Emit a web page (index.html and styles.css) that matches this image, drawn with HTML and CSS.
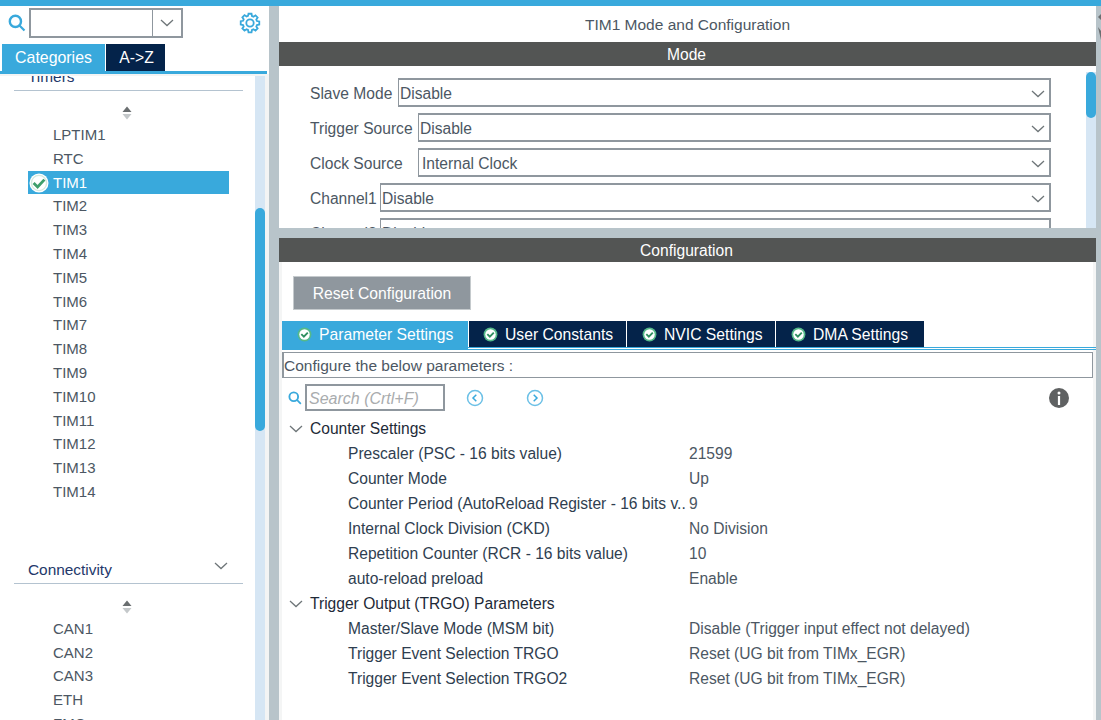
FILE: index.html
```html
<!DOCTYPE html>
<html lang="en">
<head>
<meta charset="utf-8">
<title>TIM1 Mode and Configuration</title>
<link rel="stylesheet" href="styles.css">
</head>
<body>
<svg class="defs" width="0" height="0" aria-hidden="true">
  <symbol id="chev" viewBox="0 0 14 8"><path d="M1 1l6 5.5L13 1" fill="none" stroke="#6f7679" stroke-width="1.3"/></symbol>
  <symbol id="check" viewBox="0 0 20 20"><circle cx="10" cy="10" r="9.5" fill="#fff"/><circle cx="10" cy="10" r="7.6" fill="#fff" stroke="#d6eadf" stroke-width="1.4"/><path d="M4.6 10l4 4 6.8-7.4" fill="none" stroke="#3f9f6b" stroke-width="2.8"/></symbol>
  <symbol id="mini" viewBox="0 0 16 16"><circle cx="8" cy="8" r="7.4" fill="#55b98a"/><circle cx="8" cy="8" r="5.6" fill="#fff"/><path d="M4.6 7.6l2.7 2.7 4.2-4.4" fill="none" stroke="#2f8f60" stroke-width="2"/></symbol>
  <symbol id="lens" viewBox="0 0 18 18"><circle cx="7.4" cy="7.4" r="5.6" fill="none" stroke="#39a9dc" stroke-width="2.4"/><path d="M11.5 11.5l5 5" stroke="#39a9dc" stroke-width="2.2"/></symbol>
  <symbol id="spin" viewBox="0 0 12 14"><path d="M6 0.5L10.5 6h-9z" fill="#6a6e70"/><path d="M1.5 8h9L6 13.5z" fill="#c4c8ca"/></symbol>
</svg>

<div class="topbar"></div>
<div class="app">
  <aside class="left">
    <div class="tools">
      <svg class="lens"><use href="#lens"/></svg>
      <div class="combo"><span class="combo-field"></span><span class="combo-btn"><svg class="chev"><use href="#chev"/></svg></span></div>
      <svg class="gear" viewBox="0 0 22 22"><path d="M9.3 1.5h3.4l.5 2.6 1.7.7 2.2-1.5 2.4 2.4-1.5 2.2.7 1.7 2.6.5v3.4l-2.6.5-.7 1.7 1.5 2.2-2.4 2.4-2.2-1.5-1.7.7-.5 2.6H9.3l-.5-2.6-1.7-.7-2.2 1.5-2.4-2.4 1.5-2.2-.7-1.7-2.6-.5V9.8l2.6-.5.7-1.7-1.5-2.2 2.4-2.4 2.2 1.5 1.7-.7z" fill="none" stroke="#39a9dc" stroke-width="2" transform="translate(1.1 .4) scale(.9)"/><circle cx="11" cy="11" r="3.7" fill="none" stroke="#39a9dc" stroke-width="1.8"/></svg>
    </div>
    <div class="cat-tabs"><span class="cat-tab on">Categories</span><span class="cat-tab">A-&gt;Z</span></div>
    <div class="left-body">
      <div class="list-scroll">
        <div class="list">
          <div class="sec-title clipped">Timers</div>
          <div class="spin-row"><svg class="spin"><use href="#spin"/></svg></div>
          <div class="item">LPTIM1</div>
          <div class="item">RTC</div>
          <div class="item sel"><svg class="check"><use href="#check"/></svg>TIM1</div>
          <div class="item">TIM2</div>
          <div class="item">TIM3</div>
          <div class="item">TIM4</div>
          <div class="item">TIM5</div>
          <div class="item">TIM6</div>
          <div class="item">TIM7</div>
          <div class="item">TIM8</div>
          <div class="item">TIM9</div>
          <div class="item">TIM10</div>
          <div class="item">TIM11</div>
          <div class="item">TIM12</div>
          <div class="item">TIM13</div>
          <div class="item">TIM14</div>
          <div class="sec-title second">Connectivity<svg class="chev sec-chev"><use href="#chev"/></svg></div>
          <div class="spin-row"><svg class="spin"><use href="#spin"/></svg></div>
          <div class="item">CAN1</div>
          <div class="item">CAN2</div>
          <div class="item">CAN3</div>
          <div class="item">ETH</div>
          <div class="item">FMC</div>
        </div>
      </div>
      <div class="vtrack"><div class="vthumb list-thumb"></div></div>
    </div>
  </aside>
  <div class="split"></div>
  <main class="right">
    <div class="title">TIM1 Mode and Configuration</div>
    <div class="bar">Mode</div>
    <div class="mode">
      <div class="mode-rows">
        <div class="row"><label class="lbl w-slave">Slave Mode</label><div class="sel-box">Disable<svg class="chev"><use href="#chev"/></svg></div></div>
        <div class="row"><label class="lbl w-wide">Trigger Source</label><div class="sel-box">Disable<svg class="chev"><use href="#chev"/></svg></div></div>
        <div class="row"><label class="lbl w-wide">Clock Source</label><div class="sel-box inset">Internal Clock<svg class="chev"><use href="#chev"/></svg></div></div>
        <div class="row"><label class="lbl w-chan">Channel1</label><div class="sel-box">Disable<svg class="chev"><use href="#chev"/></svg></div></div>
        <div class="row"><label class="lbl w-chan">Channel2</label><div class="sel-box">Disable<svg class="chev"><use href="#chev"/></svg></div></div>
      </div>
      <div class="vtrack mode-track"><div class="vthumb mode-thumb"></div></div>
    </div>
    <div class="hsplit"></div>
    <div class="bar">Configuration</div>
    <div class="config">
      <button class="reset">Reset Configuration</button>
      <div class="tabs">
        <span class="tab on"><svg class="mini"><use href="#mini"/></svg>Parameter Settings</span>
        <span class="tab t2"><svg class="mini"><use href="#mini"/></svg>User Constants</span>
        <span class="tab t3"><svg class="mini"><use href="#mini"/></svg>NVIC Settings</span>
        <span class="tab t3"><svg class="mini"><use href="#mini"/></svg>DMA Settings</span>
      </div>
      <div class="hint">Configure the below parameters :</div>
      <div class="search-row">
        <svg class="lens small"><use href="#lens"/></svg>
        <div class="search">Search (Crtl+F)</div>
        <svg class="nav prev" viewBox="0 0 18 18"><circle cx="9" cy="9" r="7.5" fill="none" stroke="#6cc0e6" stroke-width="1.5"/><path d="M10.3 5.8L7 9l3.3 3.2" fill="none" stroke="#39a9dc" stroke-width="1.5"/></svg>
        <svg class="nav" viewBox="0 0 18 18"><circle cx="9" cy="9" r="7.5" fill="none" stroke="#6cc0e6" stroke-width="1.5"/><path d="M7.7 5.8L11 9l-3.3 3.2" fill="none" stroke="#39a9dc" stroke-width="1.5"/></svg>
        <svg class="info" viewBox="0 0 20 20"><circle cx="10" cy="10" r="10" fill="#5f6162"/><circle cx="10" cy="5" r="1.5" fill="#fff"/><rect x="8.9" y="8" width="2.2" height="9" fill="#fff"/></svg>
      </div>
      <div class="tree">
        <div class="group"><svg class="chev"><use href="#chev"/></svg>Counter Settings</div>
        <div class="param"><span class="pname">Prescaler (PSC - 16 bits value)</span><span>21599</span></div>
        <div class="param"><span class="pname">Counter Mode</span><span>Up</span></div>
        <div class="param"><span class="pname">Counter Period (AutoReload Register - 16 bits v..</span><span>9</span></div>
        <div class="param"><span class="pname">Internal Clock Division (CKD)</span><span>No Division</span></div>
        <div class="param"><span class="pname">Repetition Counter (RCR - 16 bits value)</span><span>10</span></div>
        <div class="param"><span class="pname">auto-reload preload</span><span>Enable</span></div>
        <div class="group"><svg class="chev"><use href="#chev"/></svg>Trigger Output (TRGO) Parameters</div>
        <div class="param"><span class="pname">Master/Slave Mode (MSM bit)</span><span>Disable (Trigger input effect not delayed)</span></div>
        <div class="param"><span class="pname">Trigger Event Selection TRGO</span><span>Reset (UG bit from TIMx_EGR)</span></div>
        <div class="param"><span class="pname">Trigger Event Selection TRGO2</span><span>Reset (UG bit from TIMx_EGR)</span></div>
      </div>
    </div>
  </main>
  <div class="edge">
    <svg class="edge-arrows" viewBox="0 0 5 36"><path d="M5 1L2 4l3 3z" fill="#6a6e70"/><path d="M2 14l3 4v9z" fill="#6a6e70"/></svg>
  </div>
</div>
</body>
</html>
```
FILE: styles.css
```css
* { box-sizing: border-box; }
html, body { margin: 0; height: 100%; overflow: hidden; }
body {
  font-family: "Liberation Sans", Arial, sans-serif;
  font-size: 15px;
  color: #4c5763;
  background: #fff;
  display: flex;
  flex-direction: column;
}
.defs { position: absolute; }
.topbar { height: 6px; background: #39a9dc; flex: none; }
.app { flex: 1; display: flex; min-height: 0; }

.left { width: 269px; flex: none; display: flex; flex-direction: column; min-height: 0; }
.tools { height: 38px; display: flex; align-items: center; flex: none; padding: 0 0 4px 8px; }
.lens { width: 18px; height: 18px; flex: none; }
.combo { width: 154px; height: 30px; margin-left: 3px; border: 2px solid #8f979e; display: flex; }
.combo-field { flex: 1; }
.combo-btn { width: 29px; border-left: 1px solid #8f979e; display: flex; align-items: center; justify-content: center; }
.chev { width: 14px; height: 8px; flex: none; }
.gear { width: 22px; height: 22px; margin-left: 56px; flex: none; }

.cat-tabs { height: 30px; flex: none; display: flex; padding-left: 2px; gap: 1px; border-bottom: 3px solid #39a9dc; margin-right: 2px; }
.cat-tab { width: 59px; background: #04234a; color: #fff; font-size: 15.7px; padding-left: 2px; display: flex; align-items: center; justify-content: center; }
.cat-tab.on { width: 103px; background: #39a9dc; font-size: 15.9px; padding-left: 0; }

.left-body { flex: 1; display: flex; min-height: 0; padding-top: 2px; background: #f3f4f4; }
.list-scroll { width: 255px; flex: none; overflow: hidden; background: #fff; }
.list { margin-top: -8px; }
.sec-title { margin: 0 12px 0 14px; border-bottom: 1px solid #b4c3d0; color: #23386a; height: 24px; padding-left: 14px; line-height: 18px; font-size: 15.4px; display: flex; justify-content: space-between; align-items: flex-start; }
.clipped { height: 23px; }
.second { margin-top: 53px; height: 27px; line-height: 25px; }
.sec-chev { margin: 5px 15px 0 0; }
.spin-row { height: 32px; display: flex; justify-content: center; align-items: center; padding: 12px 2px 0 0; }
.second + .spin-row { height: 33px; padding-top: 13px; }
.spin { width: 12px; height: 14px; }
.item { height: 23.8px; line-height: 23.8px; padding-left: 53px; position: relative; }
.item.sel { background: #39a9dc; color: #fff; margin: 0 26px 0 28px; padding-left: 25px; }
.check { width: 20px; height: 20px; position: absolute; left: 1px; top: 2px; }
.vtrack { width: 10px; flex: none; background: #d6e6f4; position: relative; }
.vthumb { position: absolute; left: 0; width: 10px; background: #39a9dc; border-radius: 5px; }
.list-thumb { top: 132px; height: 223px; }

.split { width: 10px; flex: none; background: #b8c4ca; }
.right { width: 817px; flex: none; display: flex; flex-direction: column; min-height: 0; font-size: 15.6px; }
.edge { flex: 1; background: #b8c4ca; position: relative; }
.edge-arrows { position: absolute; right: 0; top: 7px; width: 5px; height: 36px; }
.title { height: 36px; flex: none; text-align: center; line-height: 37px; font-size: 15.5px; color: #4c5763; }
.bar { height: 24px; flex: none; background: #535554; color: #fff; text-align: center; line-height: 26px; font-size: 15.6px; padding-right: 2px; }

.mode { height: 162px; flex: none; display: flex; overflow: hidden; padding-top: 6px; }
.mode-rows { width: 772px; flex: none; padding-left: 31px; }
.row { display: flex; align-items: center; height: 29px; margin-top: 6px; gap: 5px; }
.row:first-child { margin-top: 6px; }
.lbl { flex: none; padding-top: 3px; white-space: nowrap; }
.w-slave { width: 83px; }
.w-wide { width: 103px; }
.w-chan { width: 65px; }
.sel-box { flex: 1; height: 29px; border: 2px solid #8f979e; border-width: 2px 2px 2px 1px; padding: 2px 4px 0 1px; display: flex; align-items: center; justify-content: space-between; }
.sel-box.inset { padding-left: 3px; }
.mode-track { margin: 0 0 0 35px; height: 162px; }
.mode-thumb { top: 0; height: 46px; }
.hsplit { height: 10px; flex: none; background: #b8c4ca; }

.config { flex: 1; min-height: 0; display: flex; flex-direction: column; border-left: 3px solid #f4f5f5; box-shadow: inset -3px 0 0 #f4f5f5; }
.reset { width: 178px; height: 34px; margin: 14px 0 0 11px; border: 1px solid #c5cacd; background: #8f979e; color: #fff; font: 15.7px "Liberation Sans", Arial, sans-serif; padding: 2px 0 0; flex: none; }
.tabs { display: flex; gap: 1px; height: 29px; margin-top: 11px; border-bottom: 3px double #39a9dc; flex: none; }
.tab { height: 26px; background: #04234a; color: #fff; font-size: 15.7px; display: flex; align-items: center; white-space: nowrap; padding: 1px 0 0 15px; }
.tab.on { width: 186px; background: #39a9dc; height: 28px; padding-bottom: 2px; }
.tab.t2 { width: 157px; padding-left: 14px; }
.tab.t3 { width: 148px; }
.mini { width: 15px; height: 15px; margin-right: 7px; flex: none; }
.hint { height: 26px; flex: none; margin: 2px 3px 0 0; border: 1px solid #8f979e; border-width: 1px 1px 1px 2px; line-height: 25px; font-size: 15.5px; }
.search-row { height: 34px; flex: none; display: flex; align-items: center; padding: 5px 0 0 6px; }
.lens.small { width: 14px; height: 14px; }
.search { width: 140px; height: 27px; margin-left: 3px; border: 2px solid #8f979e; font-style: italic; color: #a9acae; line-height: 26px; padding-left: 2px; font-size: 16px; }
.nav { width: 18px; height: 18px; flex: none; margin-left: 42px; }
.nav.prev { margin-left: 21px; }
.info { width: 20px; height: 20px; margin-left: 505px; flex: none; }
.tree { padding-top: 4px; }
.group, .param { height: 25px; line-height: 25px; white-space: nowrap; }
.group { display: flex; align-items: center; color: #1e2a38; padding-left: 7px; }
.group .chev { margin-right: 7px; }
.param { display: flex; padding-left: 66px; }
.pname { width: 341px; flex: none; color: #2f3e50; }
```
